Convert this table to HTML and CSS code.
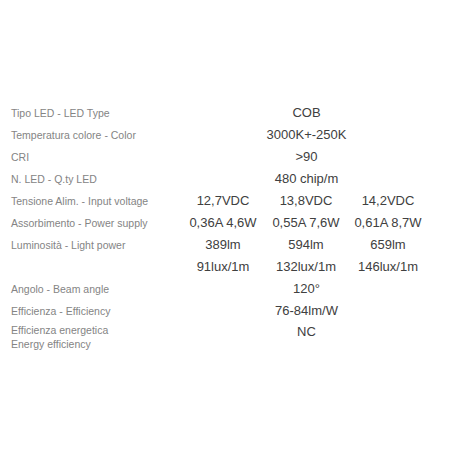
FILE: index.html
```html
<!DOCTYPE html>
<html>
<head>
<meta charset="utf-8">
<link rel="stylesheet" href="styles.css">
</head>
<body>
<div class="spec">
  <div class="label">Tipo LED - LED Type</div><div class="val all">COB</div>
  <div class="label">Temperatura colore - Color</div><div class="val all">3000K+-250K</div>
  <div class="label">CRI</div><div class="val all">&gt;90</div>
  <div class="label">N. LED - Q.ty LED</div><div class="val all">480 chip/m</div>
  <div class="label">Tensione Alim. - Input voltage</div><div class="val">12,7VDC</div><div class="val">13,8VDC</div><div class="val">14,2VDC</div>
  <div class="label">Assorbimento - Power supply</div><div class="val">0,36A 4,6W</div><div class="val">0,55A 7,6W</div><div class="val">0,61A 8,7W</div>
  <div class="label">Luminosità - Light power</div><div class="val">389lm</div><div class="val">594lm</div><div class="val">659lm</div>
  <div class="label"></div><div class="val">91lux/1m</div><div class="val">132lux/1m</div><div class="val">146lux/1m</div>
  <div class="label">Angolo - Beam angle</div><div class="val all">120°</div>
  <div class="label">Efficienza - Efficiency</div><div class="val all">76-84lm/W</div>
  <div class="label multi">Efficienza energetica<br>Energy efficiency</div><div class="val all top">NC</div>
</div>
</body>
</html>
```
FILE: styles.css
```css
html, body {
  margin: 0;
  padding: 0;
  background: #ffffff;
}
body {
  width: 452px;
  height: 452px;
  overflow: hidden;
  font-family: "Liberation Sans", Arial, sans-serif;
}
.spec {
  display: grid;
  grid-template-columns: 171px 82px 84px 80px;
  grid-auto-rows: minmax(22px, auto);
  padding: 102px 0 0 11px;
  align-items: center;
}
.label {
  font-size: 10.5px;
  color: #848484;
  line-height: 22px;
  white-space: nowrap;
}
.label.multi {
  line-height: 14px;
  align-self: start;
  padding-top: 1px;
}
.val {
  font-size: 13px;
  color: #404040;
  text-align: center;
  line-height: 22px;
  white-space: nowrap;
}
.val.all {
  grid-column: 2 / span 3;
  padding-left: 3px;
}
.val.top {
  align-self: start;
  line-height: 16px;
  padding-top: 2px;
}
```
